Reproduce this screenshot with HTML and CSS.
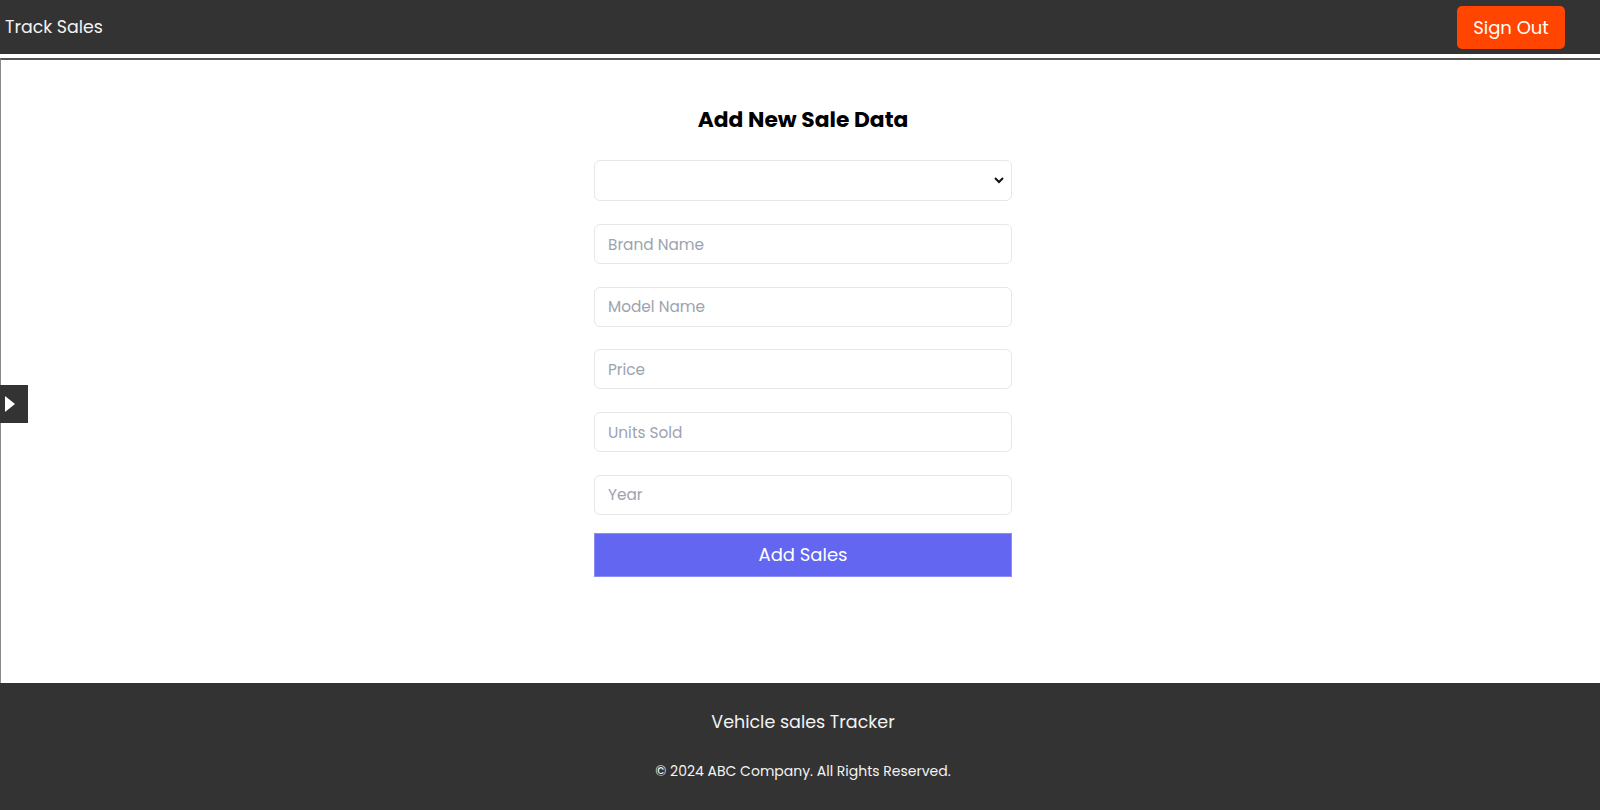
FILE: index.html
```html
<!DOCTYPE html>
<html lang="en">
<head>
<meta charset="utf-8">
<title>Track Sales</title>
<link rel="stylesheet" href="styles.css">
</head>
<body>
<header class="topbar">
  <div class="brand">Track Sales</div>
  <button class="signout" type="button">Sign Out</button>
</header>
<main class="main">
  <button class="side-toggle" type="button" aria-label="Open sidebar">
    <svg width="12" height="18" viewBox="0 0 12 18"><path d="M1 1 L11 9 L1 17 Z" fill="#ffffff"/></svg>
  </button>
  <form class="sale-form">
    <h2 class="form-title">Add New Sale Data</h2>
    <div class="select-wrap">
      <select class="field select"><option></option></select>
      <svg class="chev" width="10" height="7" viewBox="0 0 10 7"><path d="M1 1 L5 5 L9 1" fill="none" stroke="#111" stroke-width="2"/></svg>
    </div>
    <input class="field" type="text" placeholder="Brand Name">
    <input class="field" type="text" placeholder="Model Name">
    <input class="field" type="text" placeholder="Price">
    <input class="field" type="text" placeholder="Units Sold">
    <input class="field" type="text" placeholder="Year">
    <button class="submit" type="button">Add Sales</button>
  </form>
</main>
<footer class="footer">
  <p class="footer-title">Vehicle sales Tracker</p>
  <p class="footer-copy">© 2024 ABC Company. All Rights Reserved.</p>
</footer>
</body>
</html>
```

FILE: styles.css
```css
* { box-sizing: border-box; }
html, body { margin: 0; padding: 0; }
body {
  font-family: "Poppins", "Open Sans", "Noto Sans", sans-serif;
  background: #ffffff;
  width: 1600px;
  height: 810px;
  overflow: hidden;
}
.topbar {
  height: 54px;
  background: #333333;
  display: flex;
  align-items: center;
  justify-content: space-between;
  padding: 0 35px 0 5px;
}
.brand {
  color: #f2f2f2;
  font-size: 17.4px;
  padding-bottom: 1px;
}
.signout {
  width: 108px;
  height: 43px;
  background: #ff4500;
  color: #ffffff;
  border: none;
  border-radius: 5px;
  font-family: inherit;
  font-size: 18px;
}
.main {
  position: relative;
  margin-top: 4px;
  height: 625px;
  border-top: 2px solid #555555;
  border-left: 1px solid #8a8a8a;
  display: flex;
  justify-content: center;
  padding: 0 0 0 5px;
}
.side-toggle {
  position: absolute;
  left: -1px;
  top: 325px;
  width: 28px;
  height: 38px;
  background: #333333;
  border: none;
  padding: 0 0 0 4px;
  display: flex;
  align-items: center;
}
.sale-form {
  width: 418px;
  display: flex;
  flex-direction: column;
  padding-top: 43px;
}
.form-title {
  margin: 0 0 24px;
  text-align: center;
  font-size: 21.8px;
  line-height: 33px;
  font-weight: 700;
  color: #000000;
}
.select-wrap {
  position: relative;
  margin-bottom: 23px;
}
.field {
  display: block;
  width: 100%;
  height: 40px;
  border: 1px solid #e5e7eb;
  border-radius: 6px;
  background: #ffffff;
  padding: 0 13px;
  font-family: inherit;
  font-size: 15.3px;
  color: #111;
  margin-bottom: 22.7px;
  outline: none;
}
.field::placeholder { color: #9ca3af; }
.select {
  height: 41px;
  margin: 0;
  appearance: none;
  -webkit-appearance: none;
}
.chev {
  position: absolute;
  right: 8px;
  top: 17px;
}
.sale-form input.field:last-of-type { margin-bottom: 18px; }
.submit {
  height: 44px;
  background: #6366f1;
  color: #ffffff;
  border: 1px solid #8b8ef5;
  font-family: inherit;
  font-size: 18px;
}
.footer {
  height: 128px;
  background: #333333;
  color: #f2f2f2;
  text-align: center;
  padding: 27px 0 0 6px;
}
.footer-title {
  margin: 0;
  font-size: 17.5px;
  line-height: 24px;
}
.footer-copy {
  margin: 27px 0 0;
  font-size: 14px;
  line-height: 20px;
}
```
